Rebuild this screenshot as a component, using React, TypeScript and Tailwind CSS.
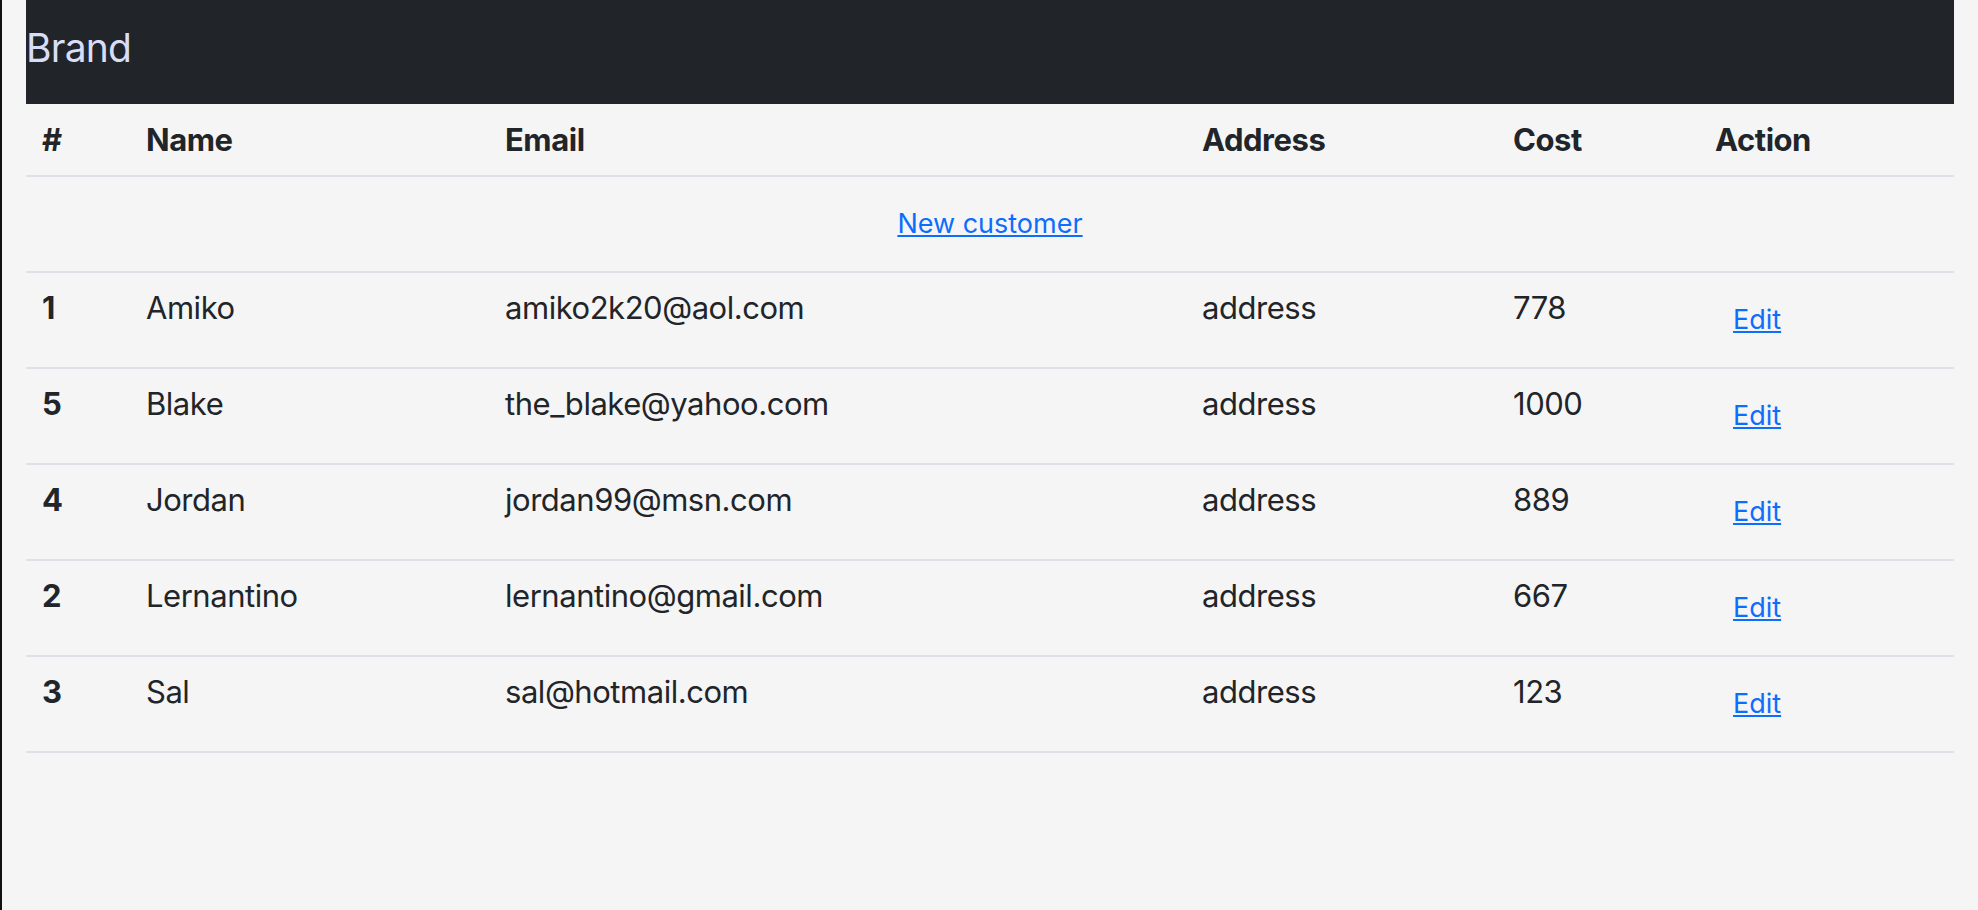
import React from 'react';

type Customer = {
  id: number;
  name: string;
  email: string;
  address: string;
  cost: number;
};

const customers: Customer[] = [
  { id: 1, name: 'Amiko', email: 'amiko2k20@aol.com', address: 'address', cost: 778 },
  { id: 5, name: 'Blake', email: 'the_blake@yahoo.com', address: 'address', cost: 1000 },
  { id: 4, name: 'Jordan', email: 'jordan99@msn.com', address: 'address', cost: 889 },
  { id: 2, name: 'Lernantino', email: 'lernantino@gmail.com', address: 'address', cost: 667 },
  { id: 3, name: 'Sal', email: 'sal@hotmail.com', address: 'address', cost: 123 },
];

export default function App() {
  return (
    <div
      className="min-h-screen bg-[#f5f5f5] border-l-2 border-[#111111] px-[24px] text-[#212529]"
      style={{ fontFamily: 'Inter, "Noto Sans", sans-serif' }}
    >
      <nav className="h-[104px] bg-[#212529]">
        <a
          href="#"
          className="block pt-[18px] text-[39px] leading-[60px] tracking-[-0.02em] text-[#d9def8]"
        >
          Brand
        </a>
      </nav>

      <table className="w-full table-fixed border-collapse text-[31px] leading-[48px] tracking-[-0.015em]">
        <colgroup>
          <col className="w-[104px]" />
          <col className="w-[359px]" />
          <col className="w-[697px]" />
          <col className="w-[311px]" />
          <col className="w-[202px]" />
          <col className="w-[255px]" />
        </colgroup>
        <thead>
          <tr className="h-[72px] border-b-2 border-[#dee2e6] text-left align-top">
            <th className="px-[16px] pt-[12px] font-bold">#</th>
            <th className="px-[16px] pt-[12px] font-bold">Name</th>
            <th className="px-[16px] pt-[12px] font-bold">Email</th>
            <th className="px-[16px] pt-[12px] font-bold">Address</th>
            <th className="px-[16px] pt-[12px] font-bold">Cost</th>
            <th className="px-[16px] pt-[12px] font-bold">Action</th>
          </tr>
        </thead>
        <tbody>
          <tr className="h-[96px] border-b-2 border-[#dee2e6] align-top">
            <td colSpan={6} className="pt-[21px] text-center">
              <a
                href="#"
                className="text-[27px] leading-[40px] tracking-normal text-[#0d6efd] underline"
              >
                New customer
              </a>
            </td>
          </tr>
          {customers.map((c) => (
            <tr key={c.id} className="h-[96px] border-b-2 border-[#dee2e6] align-top">
              <th className="px-[16px] pt-[11px] text-left font-bold">{c.id}</th>
              <td className="px-[16px] pt-[11px]">{c.name}</td>
              <td className="px-[16px] pt-[11px]">{c.email}</td>
              <td className="px-[16px] pt-[11px]">{c.address}</td>
              <td className="px-[16px] pt-[11px]">{c.cost}</td>
              <td className="px-[16px] pt-[11px]">
                <button
                  type="button"
                  className="block px-[18px] pt-[16px] text-[27px] leading-[40px] tracking-normal text-[#0d6efd] underline"
                >
                  Edit
                </button>
              </td>
            </tr>
          ))}
        </tbody>
      </table>
    </div>
  );
}
